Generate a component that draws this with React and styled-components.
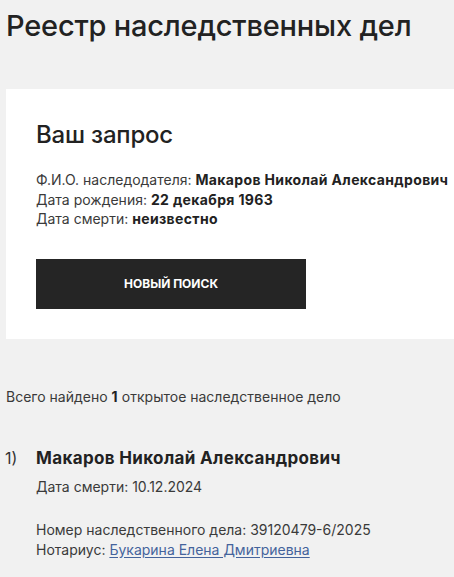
import React from 'react';
import styled, {createGlobalStyle} from 'styled-components';

const GlobalStyle = createGlobalStyle`
    html, body {
        margin: 0;
        padding: 0;
        background: #f1f1f1;
        overflow: hidden;
    }
    body {
        font-family: Inter, "Liberation Sans", Arial, sans-serif;
        color: #2b2b2b;
    }
`

const Page = styled.div`
    padding: 9px 0 0 6px;
    width: 520px;
`

const PageTitle = styled.h1`
    margin: 0 0 46px;
    font-size: 29px;
    line-height: 34px;
    font-weight: 500;
    letter-spacing: -0.2px;
    color: #222;
`

const RequestCard = styled.section`
    background: #fff;
    padding: 32px 30px 30px;
    margin-bottom: 48px;
`

const CardTitle = styled.h2`
    margin: 0 0 21px;
    font-size: 24px;
    line-height: 28px;
    font-weight: 500;
    letter-spacing: -0.2px;
    color: #222;
`

const InfoList = styled.div`
    font-size: 14px;
    line-height: 19.6px;
    color: #3a3a3a;
    white-space: nowrap;
    margin-bottom: ${p => p.$gap || 0}px;
`

const Strong = styled.b`
    color: #222;
    font-weight: 700;
    letter-spacing: 0.35px;
`

const SearchButton = styled.button`
    display: flex;
    align-items: center;
    justify-content: center;
    width: 270px;
    height: 50px;
    border: 0;
    padding: 0;
    background: #252525;
    color: #fff;
    font-family: inherit;
    font-size: 12px;
    font-weight: 700;
    text-transform: uppercase;
    cursor: pointer;
`

const Summary = styled.p`
    margin: 0 0 41px;
    font-size: 14px;
    line-height: 19.6px;
    color: #3a3a3a;
`

const CaseItem = styled.div`
    display: grid;
    grid-template-columns: 30px 1fr;
`

const CaseNumber = styled.span`
    font-size: 16px;
    line-height: 22px;
    color: #333;
    margin-left: -1px;
`

const CaseName = styled.div`
    font-size: 17px;
    line-height: 22px;
    font-weight: 700;
    letter-spacing: 0.35px;
    color: #222;
    margin-bottom: 8px;
`

const NotaryLink = styled.a`
    color: #44639c;
    text-decoration: underline;
    text-underline-offset: 2px;
`

export default function App() {
    return <>
        <GlobalStyle/>
        <Page>
            <PageTitle>Реестр наследственных дел</PageTitle>

            <RequestCard>
                <CardTitle>Ваш запрос</CardTitle>
                <InfoList $gap={30}>
                    <div>Ф.И.О. наследодателя: <Strong>Макаров Николай Александрович</Strong></div>
                    <div>Дата рождения: <Strong>22 декабря 1963</Strong></div>
                    <div>Дата смерти: <Strong>неизвестно</Strong></div>
                </InfoList>
                <SearchButton>Новый поиск</SearchButton>
            </RequestCard>

            <Summary>Всего найдено <Strong>1</Strong> открытое наследственное дело</Summary>

            <CaseItem>
                <CaseNumber>1)</CaseNumber>
                <div>
                    <CaseName>Макаров Николай Александрович</CaseName>
                    <InfoList $gap={23}>Дата смерти: 10.12.2024</InfoList>
                    <InfoList>
                        <div>Номер наследственного дела: 39120479-6/2025</div>
                        <div>Нотариус: <NotaryLink href="#">Букарина Елена Дмитриевна</NotaryLink></div>
                    </InfoList>
                </div>
            </CaseItem>
        </Page>
    </>
}
